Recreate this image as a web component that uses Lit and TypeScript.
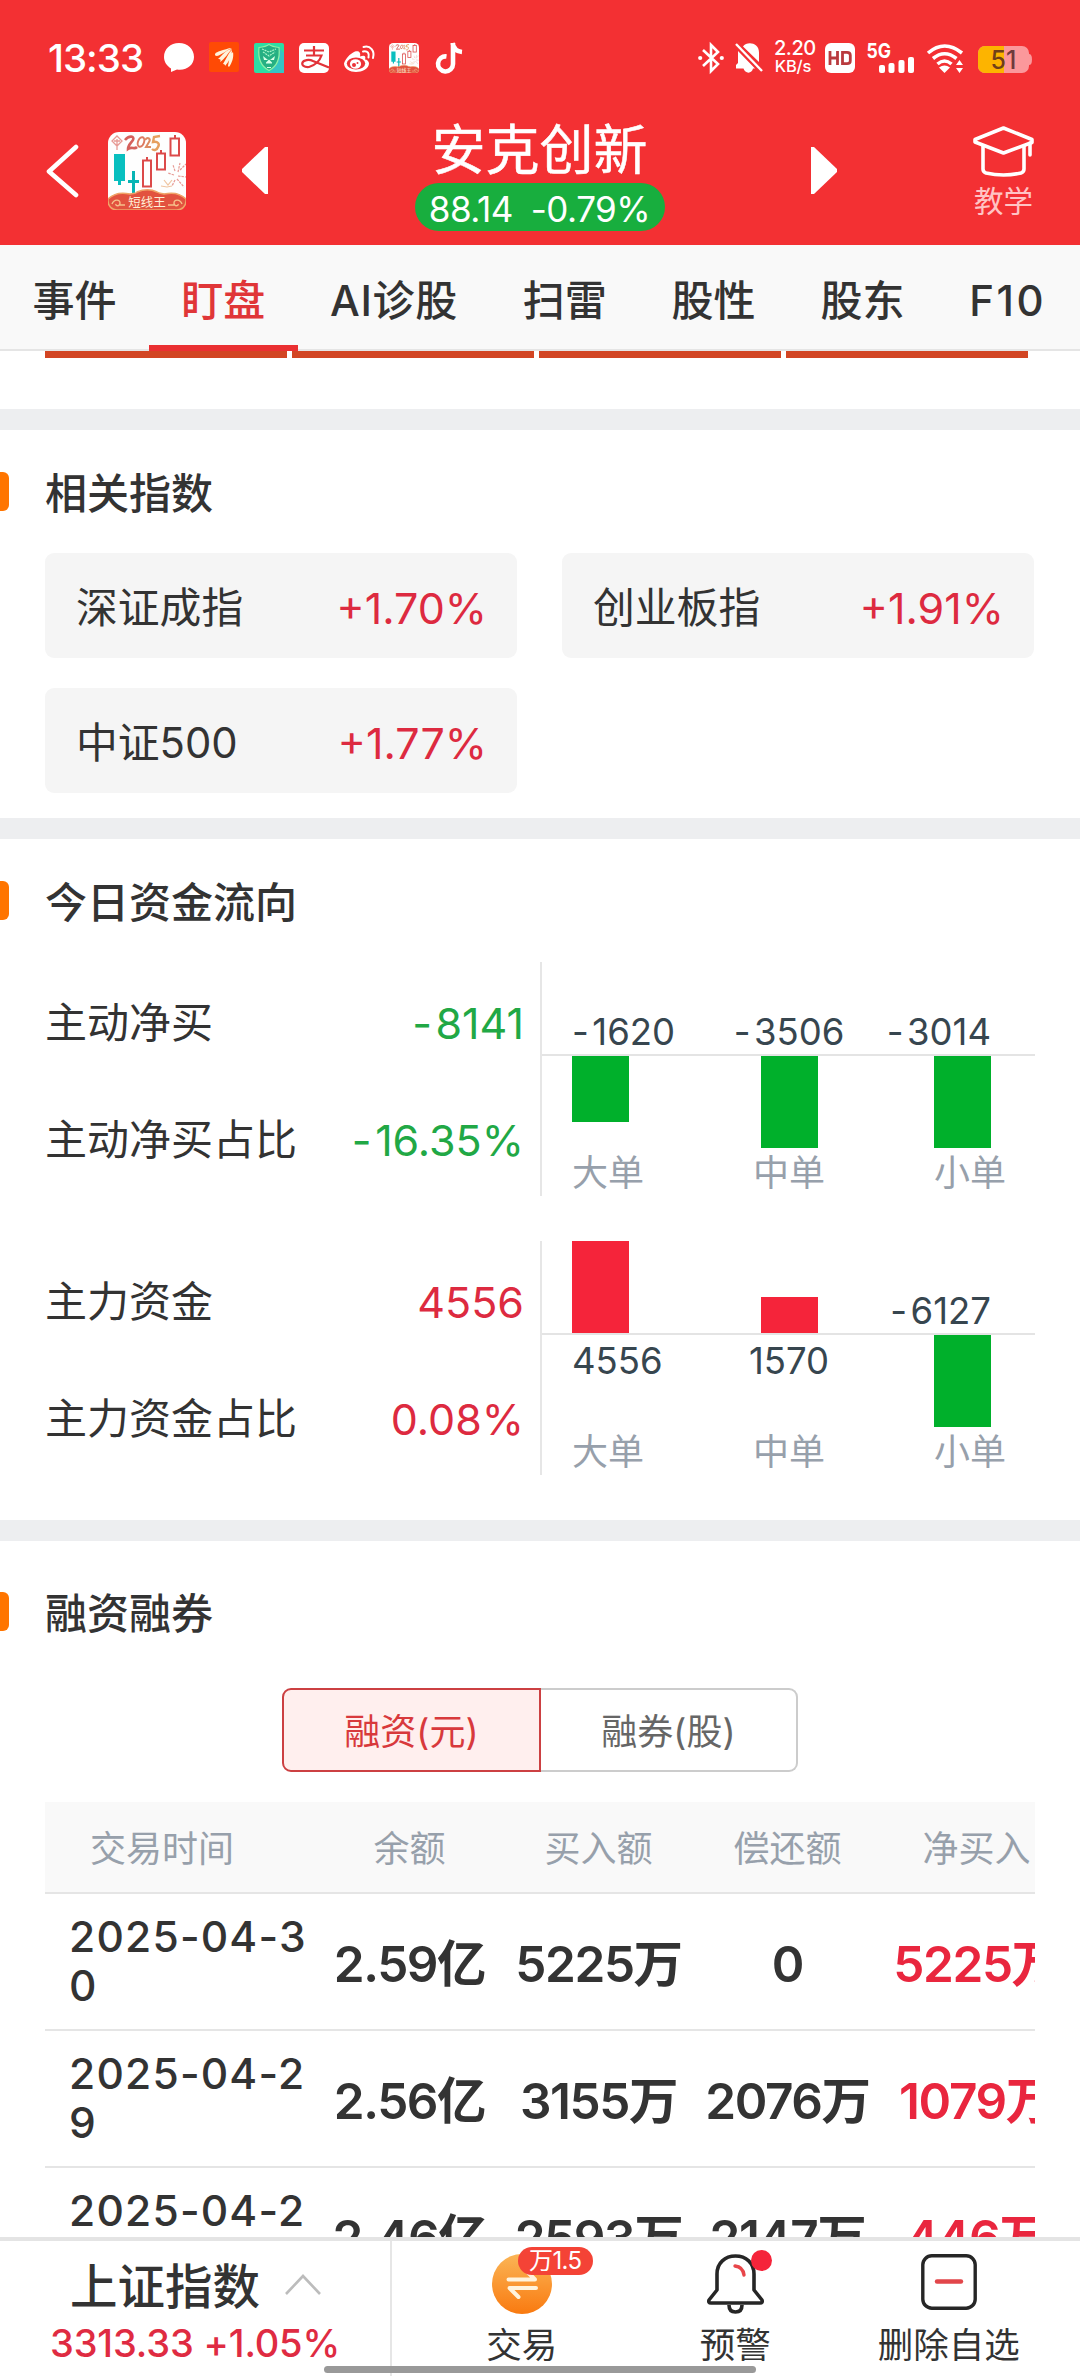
import { LitElement, html, css, svg } from "lit";
import { customElement, property } from "lit/decorators.js";

const FONT = css`"Inter", "Noto Sans CJK SC", sans-serif`;

/** Sets a leading minus apart from its digits. */
const signed = (v: string | number) => {
  const t = String(v);
  return t.startsWith("-") ? html`<span class="sign">-</span>${t.slice(1)}` : t;
};

const launcherArt = svg`
  <rect width="78" height="78" rx="11" fill="#fefefe"></rect>
  <g fill="none" stroke="#e79a94" stroke-width="1.6">
    <path d="M9 4l5 5-5 5-5-5zM9 7v11M6 9h6" stroke-width="1.3"></path>
    <path d="M72 38l6-6M70 40l2-9M70 44l8 1M69 47l7 8M67 39l-2-6M66 43l-6-2M67 48l-3 6" stroke-width="1.2" stroke-dasharray="2.500 1"></path>
    <path d="M56 48l4 5 4-5M53 54l6 1 5-1" stroke="#efc4a0" stroke-width="1.2"></path>
  </g>
  <path d="M17 8c4-5 10-4 8 0-2 3-5 5-5 9 4-3 6 1 9-2" fill="none" stroke="#d5605c" stroke-width="2.6"></path>
  <ellipse cx="33" cy="10" rx="3" ry="5" transform="rotate(20 33 10)" fill="none" stroke="#dd7a62" stroke-width="2"></ellipse>
  <path d="M37 8c3-4 6-1 4 2l-3 5h5" fill="none" stroke="#dd8a62" stroke-width="2"></path>
  <path d="M52 4l-6 1-1 5c5-1 7 2 5 5-1 3-4 4-6 2" fill="none" stroke="#e6a060" stroke-width="2.4"></path>
  <path d="M6 22h11v27h-4v4h-3v-4H6z" fill="#08bfbf"></path>
  <path d="M24 39h3v9h4v3h-4v11h-3V51h-4v-3h4z" fill="#08b4b4"></path>
  <g fill="#fff" stroke="#dc4a4a" stroke-width="2">
    <rect x="35" y="28.500" width="8" height="26"></rect>
    <rect x="49" y="21.500" width="8" height="16"></rect>
    <rect x="62.500" y="6.500" width="8.500" height="17"></rect>
    <path d="M39 25v3M53 18v3M67 3v3"></path>
  </g>
  <path d="M0 67c6-6 13-7 22-5 3-1 6 0 7-2 7-3 14-3 20 0 3 2 5 1 7 2 9-2 16-1 22 5v2a9 9 0 0 1-9 9H9a9 9 0 0 1-9-9z" fill="#e2523f" stroke="#f0a468" stroke-width="1.5"></path>
  <g fill="none" stroke="#f6c08a" stroke-width="1.4">
    <path d="M4 72c2-5 8-5 8-1s-5 3-4 1M12 73h5M74 72c-2-5-8-5-8-1s5 3 4 1M66 73h-6"></path>
  </g>
  <text x="39" y="75" text-anchor="middle" font-size="12.500" fill="#fff0d8" font-family="Noto Sans CJK SC, sans-serif">短线王</text>
`;

@customElement("launcher-mark")
class LauncherMark extends LitElement {
  @property({ type: Number }) size = 78;
  static styles = css`:host { display: block; } svg { display: block; }`;
  render() {
    return html`<svg width=${this.size} height=${this.size} viewBox="0 0 78 78">${launcherArt}</svg>`;
  }
}

@customElement("status-bar")
class StatusBar extends LitElement {
  static styles = css`
    :host { display: flex; align-items: center; height: 30px; padding: 43px 48px 0 48px; color: #fff; font-family: ${FONT}; }
    svg { display: block; flex: none; overflow: visible; }
    .time { width: 116px; font-size: 38.500px; line-height: 30px; font-weight: 500; letter-spacing: -1px; white-space: nowrap; }
    .apps { display: flex; gap: 15px; flex: 1; }
    .system { display: flex; align-items: center; }
    .mute { margin-left: 11px; }
    .speed { margin-left: 12px; width: 38px; font-weight: 500; white-space: nowrap; text-align: center; }
    .rate { font-size: 20px; line-height: 16px; letter-spacing: -0.5px; margin-top: -1px; }
    .unit { font-size: 16.500px; line-height: 17px; letter-spacing: -0.2px; margin-top: 2px; }
    .hd { margin-left: 13px; }
    .signal { margin-left: 12px; }
    .wifi { margin-left: 13px; }
    .battery { margin-left: 15px; }
  `;
  render() {
    return html`
      <div class="time">13:33</div>
      <div class="apps">
        <svg width="30" height="30" viewBox="0 0 30 30"><path d="M15 0C6.500 0 0 6 0 14c0 5 3 9 7 11.500V29l6-2.500C22.500 28 30 22 30 14 30 6 23.500 0 15 0z" fill="#fff"></path></svg>
        <svg width="30" height="30" viewBox="0 0 30 30"><rect y="-1" width="30" height="30" rx="2" fill="#ff4a05"></rect><path d="M6 11c1-2 3-2 5-3 4-1 8-3 12-3-6 2-10 7-15 8-2 0-2-1-2-2zM9 16c4-3 7-9 14-10-4 4-7 10-12 13 1-2 1-3-2-3zM14 21c3-5 6-12 9-14 0 5-3 12-7 16 0-1 0-2-2-2zM19 23c1-5 2-12 5-14 1 5-1 11-4 15z" fill="#fff4dc"></path></svg>
        <svg width="30" height="30" viewBox="0 0 30 30"><rect width="30" height="30" rx="2" fill="#2ddda4"></rect><path d="M24 4l6 6v20H15l9-10z" fill="#36c4c4"></path><path d="M15 1.500c3 2 6 2.500 10 3 1 9 0 18-10 23C5 22.500 4 13.500 5 4.500c4-.5 7-1 10-3z" fill="#25b083" stroke="#8df0a8" stroke-width="1.200"></path><path d="M8 6l7 3 7-3M9 9l6 4 6-4" fill="none" stroke="#a8f5c8" stroke-width="1.200" stroke-dasharray="2 .8"></path><path d="M9 13l5 4H10zM21 13l-5 4h4zM12 19.500l3-3 3 3v1h-6zM13 24h4v1h-4z" fill="#d8ffe8"></path></svg>
        <svg width="30" height="30" viewBox="0 0 30 30"><rect width="30" height="30" rx="5" fill="#fff"></rect><g fill="none" stroke="#e23238" stroke-width="2.200"><path d="M5 7.500h20M15 3v9.500M7 12.500h15.500c-2 6-7.500 10-12.500 11.500-5 .5-7.500-2-6.500-4.500s6.500-3.500 10.500-1.500l16 6.500"></path></g></svg>
        <svg width="30" height="30" viewBox="0 0 30 30"><path d="M11 8.500c-5 2-10 8-11 12C0 25.500 6 29 12 29s13-3.500 13-8.500c0-2-2-4-4-4 1-3 0-5-5-3 1-4-1-6-5-5z" fill="#fff"></path><ellipse cx="12" cy="20.500" rx="9.200" ry="6" fill="#ec3238"></ellipse><ellipse cx="11.500" cy="21" rx="5.600" ry="4.800" fill="#fff"></ellipse><circle cx="10" cy="22" r="2" fill="#ec3238"></circle><circle cx="13.500" cy="20" r="1" fill="#ec3238"></circle><path d="M19 8.500c5-1 6.500 2 5.500 6M19.500 4c7-2 11.500 4 9.500 11" fill="none" stroke="#fff" stroke-width="2" stroke-linecap="round"></path></svg>
        <launcher-mark .size=${30}></launcher-mark>
        <svg width="30" height="30" viewBox="0 0 30 30"><path d="M12.500 13.500a7.500 7.500 0 1 0 6.500 7.500V0M18.500 0c1 6 4 8.500 9.500 9" fill="none" stroke="#fff" stroke-width="4.600"></path></svg>
      </div>
      <div class="system">
        <svg width="26" height="30" viewBox="0 0 26 30"><path d="M5 7l15 14-7 7V2l7 7L5 23" fill="none" stroke="#fff" stroke-width="2.600"></path><circle cx="2.200" cy="15" r="2.100" fill="#fff"></circle><circle cx="23.800" cy="15" r="2.100" fill="#fff"></circle></svg>
        <svg class="mute" width="27" height="30" viewBox="0 0 27 30"><path d="M8 3.500C12-2 24-.5 24 9.500V19zM3 8l17 17.500h-2c-1 5.500-8 5.500-9.500 0H1V22l2-2z" fill="#fff"></path><path d="M1 1l26 27" stroke="#fff" stroke-width="2.400"></path></svg>
        <div class="speed"><div class="rate">2.20</div><div class="unit">KB/s</div></div>
        <svg class="hd" width="30" height="30" viewBox="0 0 30 30"><rect width="30" height="30" rx="6" fill="#fff"></rect><path d="M5 8v14M12.500 8v14M5 15h7.500M17.500 9.300h4.500q3.300 0 3.300 3v5.400q0 3-3.300 3h-4.500z" fill="none" stroke="#b93a3e" stroke-width="2.800"></path></svg>
        <svg class="signal" width="47" height="30" viewBox="0 0 47 30"><text x="-0.500" y="15" font-size="20.500" font-weight="700" fill="#fff" textLength="24.500" lengthAdjust="spacingAndGlyphs">5G</text><g fill="#fff"><rect x="12" y="22" width="6" height="8" rx="2"></rect><rect x="21.500" y="20" width="6" height="10" rx="2"></rect><rect x="31.500" y="17" width="6" height="13" rx="2"></rect><rect x="41" y="14" width="6" height="16" rx="2"></rect></g></svg>
        <svg class="wifi" width="36" height="30" viewBox="0 0 36 30"><g fill="none" stroke="#fff" stroke-width="3.600"><path d="M1 10q16.500-14 34 0"></path><path d="M6 15.500q11.500-9.500 23.500 0"></path><path d="M10.500 21q7-6 14 0"></path></g><path d="M17.500 30l-5.500-5.500q5.500-4 11 0z" fill="#fff"></path><path d="M32.500 17l3.500 5h-7zM32.500 30l3.500-5h-7z" fill="#fff"></path></svg>
        <svg class="battery" width="54" height="30" viewBox="0 0 54 30"><path d="M51 11q3 0 3 5.500T51 22z" fill="#fb989b"></path><rect y="3" width="51" height="27" rx="7" fill="#fb989b"></rect><path d="M7 3h19v27H7a7 7 0 0 1-7-7V10a7 7 0 0 1 7-7z" fill="#fdb400"></path><text x="25.500" y="25.500" text-anchor="middle" font-size="25" font-weight="500" fill="#704018">5<tspan fill="#6e3a3c">1</tspan></text></svg>
      </div>
    `;
  }
}

@customElement("stock-nav")
class StockNav extends LitElement {
  static styles = css`
    :host { display: flex; align-items: flex-start; height: 122px; padding: 50px 46px 0 46px; font-family: ${FONT}; color: #fff; }
    svg { display: block; flex: none; }
    .back { margin-top: 21px; }
    .logo { margin: 9px 56px 0 29px; }
    .arrow { margin-top: 24px; }
    .quote { flex: 1; display: flex; flex-direction: column; align-items: center; }
    .name { font-size: 54px; line-height: 60px; margin-top: -2px; font-weight: 400; -webkit-text-stroke: 0.5px #fff; }
    .pill { box-sizing: border-box; display: flex; justify-content: center; gap: 18px; width: 250px; height: 48px; margin-top: 2px; padding-top: 1px; border-radius: 24px; background: #18ae3e; font-size: 35px; line-height: 50px; letter-spacing: -0.5px; white-space: nowrap; }
    .learn { margin: 3px 0 0 136px; display: flex; flex-direction: column; align-items: center; width: 61px; }
    .caption { font-size: 29.500px; line-height: 36px; margin-top: 6px; color: #ffc4c4; white-space: nowrap; }
  `;
  render() {
    return html`
      <svg class="back" width="33" height="54" viewBox="0 0 33 54"><path d="M30 3L3 27.500 30 51" fill="none" stroke="#fff" stroke-width="4.600" stroke-linecap="round" stroke-linejoin="round"></path></svg>
      <launcher-mark class="logo"></launcher-mark>
      <svg class="arrow" width="26" height="47" viewBox="0 0 26 47"><path d="M26 0v47h-3L0 25v-3L23 0z" fill="#fff"></path></svg>
      <div class="quote">
        <div class="name">安克创新</div>
        <div class="pill"><span>88.14</span><span>-0.79%</span></div>
      </div>
      <svg class="arrow" width="26" height="47" viewBox="0 0 26 47"><path d="M0 0v47h3l23-22v-3L3 0z" fill="#fff"></path></svg>
      <div class="learn">
        <svg width="61" height="51" viewBox="0 0 61 51"><g fill="none" stroke="#fff" stroke-width="3.600" stroke-linejoin="round" stroke-linecap="round"><path d="M30.500 2L59 13.500v3L30.500 27 2 16v-2.500z"></path><path d="M10 20v23q0 3 3 4 17.500 4 35 0 3-1 3-4V20M57 17v12"></path></g></svg>
        <div class="caption">教学</div>
      </div>
    `;
  }
}

@customElement("tab-strip")
class TabStrip extends LitElement {
  static styles = css`
    :host { display: flex; height: 104px; border-bottom: 2px solid #e5e5e5; background: #f9f9f9; font-family: ${FONT}; }
    .tab { position: relative; flex: none; padding: 0 32.400px; font-size: 42px; font-weight: 500; line-height: 112px; color: #333; white-space: nowrap; }
    .latin { letter-spacing: 0.700px; }
    .code { letter-spacing: 2.600px; }
    .on { color: #e03638; }
    .on::after { content: ""; position: absolute; left: 0; right: 0; bottom: -2px; height: 6px; background: #ea3032; }
  `;
  render() {
    const tabs: [string, string][] = [["事件", ""], ["盯盘", "on"], ["AI诊股", "latin"], ["扫雷", ""], ["股性", ""], ["股东", ""], ["F10", "code"]];
    return html`${tabs.map(([t, kind]) => html`<div class="tab ${kind}">${t}</div>`)}`;
  }
}

@customElement("section-title")
class SectionTitle extends LitElement {
  static styles = css`
    :host { display: flex; align-items: center; height: 39px; font-family: ${FONT}; }
    .mark { width: 9px; height: 39px; border-radius: 0 6px 6px 0; background: #ff7500; }
    .label { margin: 4px 0 0 36px; font-size: 42px; font-weight: 500; line-height: 39px; color: #333; }
  `;
  render() {
    return html`<div class="mark"></div><div class="label"><slot></slot></div>`;
  }
}

interface Order { name: string; value: number; bar: number }
interface Flow { rows: [string, string][]; tone: string; orders: Order[] }

@customElement("flow-block")
class FlowBlock extends LitElement {
  @property({ attribute: false }) flow!: Flow;
  static styles = css`
    :host { display: flex; height: 234px; font-family: ${FONT}; }
    .figures { width: 478px; padding-right: 17px; display: flex; flex-direction: column; }
    .figure { flex: 1; display: flex; align-items: center; justify-content: space-between; font-size: 42px; line-height: 60px; padding-top: 5px; color: #333; white-space: nowrap; }
    .sign { letter-spacing: 3.500px; }
    .down, .up { font-size: 43px; margin-right: -1px; }
    .down { color: #21a845; }
    .up { color: #dd2a40; }
    .chart { width: 493px; border-left: 2px solid #e6e6e6; display: flex; flex-direction: column; }
    .cols { flex: none; display: grid; grid-template-columns: 129px 176px 114px; padding-left: 30px; }
    .above, .below { height: 92px; }
    .above { border-bottom: 2px solid #e4e4e4; }
    .cell { display: flex; flex-direction: column; align-items: flex-start; }
    .above .cell { justify-content: flex-end; }
    .cell:nth-child(2) { align-items: center; }
    .cell:nth-child(3) { align-items: flex-end; }
    .bar { width: 57px; }
    .gain { background: #f5243a; }
    .loss { background: #00b02b; }
    .num { font-size: 36.500px; line-height: 44px; color: #37464f; white-space: nowrap; }
    .below .num { padding-top: 4px; }
    .kind { font-size: 36px; line-height: 51px; color: #97a0ab; white-space: nowrap; }
    .kind.cell:nth-child(3) { align-items: flex-start; padding-left: 57px; }
  `;
  render() {
    const { rows, tone, orders } = this.flow;
    const bar = (o: Order) => html`<div class="bar ${o.value > 0 ? "gain" : "loss"}" style="height:${o.bar}px"></div>`;
    const num = (o: Order) => html`<div class="num">${signed(o.value)}</div>`;
    return html`
      <div class="figures">
        ${rows.map(([k, v]) => html`<div class="figure"><span>${k}</span><span class=${tone}>${signed(v)}</span></div>`)}
      </div>
      <div class="chart">
        <div class="cols above">${orders.map((o) => html`<div class="cell">${o.value > 0 ? bar(o) : num(o)}</div>`)}</div>
        <div class="cols below">${orders.map((o) => html`<div class="cell">${o.value > 0 ? num(o) : bar(o)}</div>`)}</div>
        <div class="cols">${orders.map((o) => html`<div class="kind cell">${o.name}</div>`)}</div>
      </div>
    `;
  }
}

@customElement("margin-table")
class MarginTable extends LitElement {
  static styles = css`
    :host { display: block; width: 990px; overflow: hidden; font-family: ${FONT}; }
    .row { display: grid; grid-template-columns: 270px repeat(4, 189px); width: 1026px; height: 135px; align-items: center; border-bottom: 2px solid #e5e5e5; }
    .head { height: 90px; background: #f9f9f9; color: #97a0ab; font-size: 36px; line-height: 60px; }
    .when { padding-left: 45px; }
    .head div { padding-top: 4px; }
    .head div, .num { text-align: center; white-space: nowrap; }
    .head .when { text-align: left; }
    .date { padding: 0 4px 1px 24px; font-size: 42.500px; line-height: 49px; font-weight: 500; color: #333; word-break: break-all; letter-spacing: 1.200px; }
    .num { font-size: 49.500px; line-height: 60px; font-weight: 600; color: #333; letter-spacing: -1.400px; padding-top: 5px; }
    .net { color: #e9263e; }
  `;
  render() {
    const head = ["余额", "买入额", "偿还额", "净买入"];
    const rows = [
      ["2025-04-30", "2.59亿", "5225万", "0", "5225万"],
      ["2025-04-29", "2.56亿", "3155万", "2076万", "1079万"],
      ["2025-04-28", "2.46亿", "2593万", "2147万", "446万"],
    ];
    return html`
      <div class="row head"><div class="when">交易时间</div>${head.map((h) => html`<div>${h}</div>`)}</div>
      ${rows.map(([d, ...v]) => html`<div class="row"><div class="date">${d}</div>${v.map((x, i) => html`<div class="num ${i === 3 ? "net" : ""}">${x}</div>`)}</div>`)}
    `;
  }
}

@customElement("bottom-bar")
class BottomBar extends LitElement {
  static styles = css`
    :host { position: relative; display: flex; flex: none; height: 135px; border-top: 4px solid #e4e4e4; background: #fff; font-family: ${FONT}; color: #333; }
    svg { display: block; overflow: visible; }
    .index { width: 390px; border-right: 2px solid #e6e6e6; }
    .top { display: flex; align-items: center; padding: 14px 0 0 70px; font-size: 47.500px; line-height: 64px; font-weight: 500; }
    .caret { margin: -5px 0 0 25px; }
    .points { padding-left: 50px; margin-top: 2px; font-size: 38px; line-height: 44px; font-weight: 500; color: #df2b42; white-space: nowrap; letter-spacing: -0.150px; }
    .actions { flex: 1; display: grid; grid-template-columns: repeat(3, 213.500px); padding-left: 23px; }
    .action { display: flex; flex-direction: column; align-items: center; padding-top: 13px; }
    .glyph { position: relative; height: 60px; }
    .label { margin-top: 7px; font-size: 35.500px; line-height: 49px; white-space: nowrap; }
    .fee { position: absolute; left: 26px; top: -7px; width: 75px; height: 28px; border-radius: 14px; background: #f44336; color: #fff; font-size: 24px; line-height: 28px; text-align: center; white-space: nowrap; letter-spacing: -0.6px; }
    .dot { position: absolute; left: 44px; top: -4px; width: 21px; height: 21px; border-radius: 50%; background: #f5243a; }
    .home { position: absolute; left: 324px; bottom: 3px; width: 432px; height: 7px; border-radius: 4px; background: #999; }
  `;
  render() {
    return html`
      <div class="index">
        <div class="top">上证指数<svg class="caret" width="36" height="21" viewBox="0 0 36 21"><path d="M1 20L18 2l17 18" fill="none" stroke="#bcbcbc" stroke-width="2.600"></path></svg></div>
        <div class="points">3313.33 +1.05%</div>
      </div>
      <div class="actions">
        <div class="action">
          <div class="glyph">
            <svg width="60" height="60" viewBox="0 0 60 60"><defs><linearGradient id="g" x1="0" y1="0" x2="0" y2="1"><stop offset="0" stop-color="#fbb556"></stop><stop offset="1" stop-color="#f97a10"></stop></linearGradient></defs><circle cx="30" cy="30" r="30" fill="url(#g)"></circle><path d="M16.500 25.500H43L33 15.500M44 34H17.500l9 9" fill="none" stroke="#fff3dc" stroke-width="4" stroke-linecap="round" stroke-linejoin="round"></path></svg>
            <div class="fee">万1.5</div>
          </div>
          <div class="label">交易</div>
        </div>
        <div class="action">
          <div class="glyph">
            <svg width="57" height="60" viewBox="0 0 57 60"><g fill="none" stroke="#262626" stroke-width="3.600" stroke-linejoin="round"><path d="M10 36V20C10 9 18 2 28.500 2S47 9 47 20v16l8 10q1 3-2 3H4q-3 0-2-3z"></path><path d="M22 51q0 7 6.500 7t6.500-7"></path></g><path d="M28 12q8 1 9 9" fill="none" stroke="#e8464a" stroke-width="3.400" stroke-linecap="round"></path></svg>
            <div class="dot"></div>
          </div>
          <div class="label">预警</div>
        </div>
        <div class="action">
          <div class="glyph"><svg width="56" height="56" viewBox="0 0 56 56"><rect x="1.800" y="1.800" width="52.400" height="52.400" rx="9" fill="none" stroke="#262626" stroke-width="3.400"></rect><path d="M16 27.500h24" stroke="#e2464a" stroke-width="4.400" stroke-linecap="round"></path></svg></div>
          <div class="label">删除自选</div>
        </div>
      </div>
      <div class="home"></div>
    `;
  }
}

@customElement("app-root")
class AppRoot extends LitElement {
  static styles = css`
    :host { display: flex; flex-direction: column; width: 1080px; height: 2376px; overflow: hidden; background: #fff; font-family: ${FONT}; }
    .header { flex: none; height: 245px; background: #f33033; }
    tab-strip { flex: none; }
    .body { flex: 1; min-height: 0; overflow: hidden; display: flex; flex-direction: column; }
    .body > * { flex: none; }
    .segments { display: grid; grid-template-columns: repeat(4, 242px); gap: 5px; padding-left: 45px; height: 58px; }
    .segment { height: 7px; background: #d24523; }
    .band { height: 21px; background: #edeef0; }
    .indices { display: grid; grid-template-columns: 472px 472px; gap: 30px 45px; padding: 42px 45px 25px; }
    .card { box-sizing: border-box; display: flex; align-items: center; justify-content: space-between; height: 105px; padding: 4px 31px 0 31px; border-radius: 9px; background: #f5f5f5; font-size: 41.800px; line-height: 60px; color: #333; white-space: nowrap; }
    .pct { color: #dd2a40; font-size: 43px; margin-right: -1px; }
    .head { padding-top: 42px; }
    .wide { padding-top: 51px; }
    .flows { display: flex; flex-direction: column; gap: 45px; padding: 42px 45px 45px 45px; }
    .toggle { display: flex; align-self: center; width: 516px; height: 84px; margin: 57px 0 30px; }
    .option { box-sizing: border-box; flex: 1; border: 2px solid #ccc; border-left: 0; border-radius: 0 9px 9px 0; font-size: 36px; line-height: 85px; text-align: center; color: #666; white-space: nowrap; }
    .active { border: 2px solid #cc4042; border-radius: 9px 0 0 9px; background: #ffefee; color: #d8393c; }
    margin-table { margin-left: 45px; }
  `;
  render() {
    const indices = [["深证成指", "+1.70%"], ["创业板指", "+1.91%"], ["中证500", "+1.77%"]];
    const flows: Flow[] = [
      { rows: [["主动净买", "-8141"], ["主动净买占比", "-16.35%"]], tone: "down",
        orders: [{ name: "大单", value: -1620, bar: 66 }, { name: "中单", value: -3506, bar: 92 }, { name: "小单", value: -3014, bar: 92 }] },
      { rows: [["主力资金", "4556"], ["主力资金占比", "0.08%"]], tone: "up",
        orders: [{ name: "大单", value: 4556, bar: 92 }, { name: "中单", value: 1570, bar: 36 }, { name: "小单", value: -6127, bar: 92 }] },
    ];
    return html`
      <div class="header"><status-bar></status-bar><stock-nav></stock-nav></div>
      <tab-strip></tab-strip>
      <div class="body">
        <div class="segments">${[0, 1, 2, 3].map(() => html`<div class="segment"></div>`)}</div>
        <div class="band"></div>
        <section-title class="head">相关指数</section-title>
        <div class="indices">${indices.map(([n, p]) => html`<div class="card"><span>${n}</span><span class="pct">${p}</span></div>`)}</div>
        <div class="band"></div>
        <section-title class="head">今日资金流向</section-title>
        <div class="flows">${flows.map((f) => html`<flow-block .flow=${f}></flow-block>`)}</div>
        <div class="band"></div>
        <section-title class="wide">融资融券</section-title>
        <div class="toggle"><div class="option active">融资(元)</div><div class="option">融券(股)</div></div>
        <margin-table></margin-table>
      </div>
      <bottom-bar></bottom-bar>
    `;
  }
}
